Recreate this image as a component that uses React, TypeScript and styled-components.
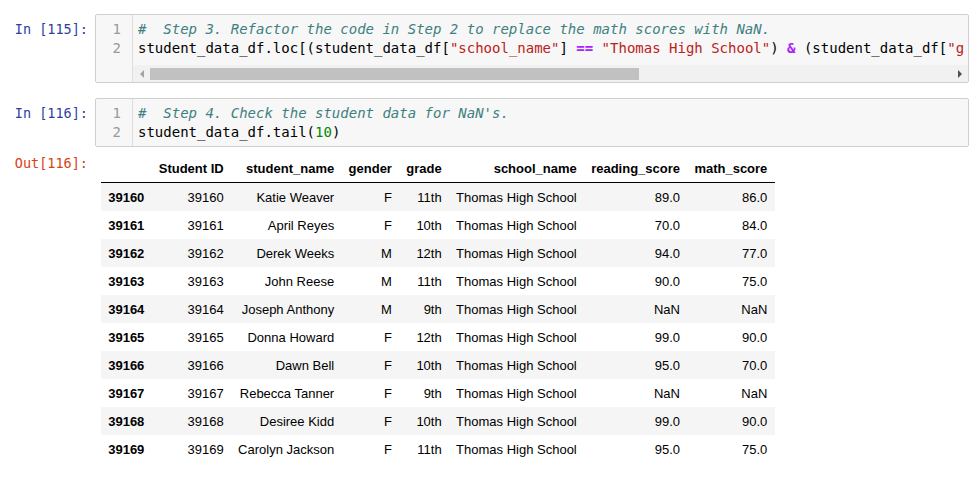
import * as React from 'react';
import styled, { createGlobalStyle } from 'styled-components';

const GlobalStyle = createGlobalStyle`
	html, body {
		margin: 0;
		padding: 0;
		background: #ffffff;
	}
`;

const Notebook = styled.div`
	padding: 14px 4px 0 0;
	display: flex;
	flex-direction: column;
`;

const Cell = styled.div<{ $gap?: number }>`
	display: flex;
	align-items: flex-start;
	margin-top: ${props => props.$gap || 0}px;
`;

const Prompt = styled.div<{ $out?: boolean }>`
	width: 95px;
	flex: none;
	box-sizing: border-box;
	padding: ${props => (props.$out ? '8px' : '6px')} 7px 0 0;
	text-align: right;
	font-family: 'DejaVu Sans Mono', monospace;
	font-size: 13.5px;
	line-height: ${props => (props.$out ? '17px' : '19px')};
	color: ${props => (props.$out ? '#D84315' : '#303F9F')};
	white-space: pre;
`;

const InputBox = styled.div`
	flex: 1;
	min-width: 0;
	display: flex;
	overflow: hidden;
	border: 1px solid #cfcfcf;
	border-radius: 2px;
	background: #f7f7f7;
`;

const Gutter = styled.div`
	width: 37px;
	flex: none;
	box-sizing: border-box;
	border-right: 1px solid #dddddd;
	padding: 5px 11px 0 0;
	text-align: right;
	font-family: 'DejaVu Sans Mono', monospace;
	font-size: 14px;
	line-height: 19px;
	color: #999999;
`;

const CodeColumn = styled.div`
	flex: 1;
	min-width: 0;
	display: flex;
	flex-direction: column;
`;

const CodeLines = styled.div<{ $bottom: number }>`
	padding: 5px 0 ${props => props.$bottom}px 5px;
	overflow: hidden;
	font-family: 'DejaVu Sans Mono', monospace;
	font-size: 14px;
	line-height: 19px;
	color: #000000;
	white-space: pre;
`;

const CodeLine = styled.div`
	height: 19px;
`;

const Comment = styled.span`
	color: #408080;
	font-style: italic;
`;

const Str = styled.span`
	color: #BA2121;
`;

const Op = styled.span`
	color: #AA22FF;
	font-weight: bold;
`;

const Num = styled.span`
	color: #008800;
`;

const Scrollbar = styled.div`
	height: 17px;
	display: flex;
	align-items: center;
	background: #f1f1f1;
`;

const ScrollButton = styled.div`
	width: 17px;
	height: 17px;
	flex: none;
	display: flex;
	align-items: center;
	justify-content: center;
`;

const Arrow = styled.div<{ $dir: 'left' | 'right' }>`
	width: 0;
	height: 0;
	border-top: 4px solid transparent;
	border-bottom: 4px solid transparent;
	${props => (props.$dir === 'left' ? 'border-right: 4px solid #a3a3a3;' : 'border-left: 4px solid #505050;')}
`;

const Track = styled.div`
	flex: 1;
	height: 12px;
`;

const Thumb = styled.div`
	height: 12px;
	background: #c1c1c1;
`;

const OutputArea = styled.div`
	flex: 1;
	padding: 7px 0 0 6px;
`;

const DataTable = styled.table`
	border-collapse: collapse;
	border-spacing: 0;
	font-family: 'Liberation Sans', Arial, sans-serif;
	font-size: 13px;
	color: #000000;

	th, td {
		padding: 6.5px 7.2px;
		text-align: right;
		vertical-align: middle;
		white-space: nowrap;
		line-height: normal;
	}

	th {
		font-weight: bold;
	}

	thead tr {
		border-bottom: 1px solid #000000;
	}

	tbody tr:nth-child(odd) {
		background: #f5f5f5;
	}
`;

const columns = ['Student ID', 'student_name', 'gender', 'grade', 'school_name', 'reading_score', 'math_score'];

const rows: [number, string, string, string, string, string][] = [
	[39160, 'Katie Weaver', 'F', '11th', '89.0', '86.0'],
	[39161, 'April Reyes', 'F', '10th', '70.0', '84.0'],
	[39162, 'Derek Weeks', 'M', '12th', '94.0', '77.0'],
	[39163, 'John Reese', 'M', '11th', '90.0', '75.0'],
	[39164, 'Joseph Anthony', 'M', '9th', 'NaN', 'NaN'],
	[39165, 'Donna Howard', 'F', '12th', '99.0', '90.0'],
	[39166, 'Dawn Bell', 'F', '10th', '95.0', '70.0'],
	[39167, 'Rebecca Tanner', 'F', '9th', 'NaN', 'NaN'],
	[39168, 'Desiree Kidd', 'F', '10th', '99.0', '90.0'],
	[39169, 'Carolyn Jackson', 'F', '11th', '95.0', '75.0']
];

export default function App() {
	return (
		<>
			<GlobalStyle />
			<Notebook>
				<Cell>
					<Prompt>In [115]:</Prompt>
					<InputBox>
						<Gutter>
							<div>1</div>
							<div>2</div>
						</Gutter>
						<CodeColumn>
							<CodeLines $bottom={7}>
								<CodeLine><Comment>#  Step 3. Refactor the code in Step 2 to replace the math scores with NaN.</Comment></CodeLine>
								<CodeLine>
									student_data_df.loc[(student_data_df[<Str>"school_name"</Str>] <Op>==</Op> <Str>"Thomas High School"</Str>) <Op>&amp;</Op> (student_data_df[<Str>"g</Str>
								</CodeLine>
							</CodeLines>
							<Scrollbar>
								<ScrollButton><Arrow $dir="left" /></ScrollButton>
								<Track>
									<Thumb style={{ width: '61%' }} />
								</Track>
								<ScrollButton><Arrow $dir="right" /></ScrollButton>
							</Scrollbar>
						</CodeColumn>
					</InputBox>
				</Cell>

				<Cell $gap={15}>
					<Prompt>In [116]:</Prompt>
					<InputBox>
						<Gutter>
							<div>1</div>
							<div>2</div>
						</Gutter>
						<CodeColumn>
							<CodeLines $bottom={4}>
								<CodeLine><Comment>#  Step 4. Check the student data for NaN's.</Comment></CodeLine>
								<CodeLine>student_data_df.tail(<Num>10</Num>)</CodeLine>
							</CodeLines>
						</CodeColumn>
					</InputBox>
				</Cell>

				<Cell>
					<Prompt $out>Out[116]:</Prompt>
					<OutputArea>
						<DataTable>
							<thead>
								<tr>
									<th></th>
									{columns.map(c => <th key={c}>{c}</th>)}
								</tr>
							</thead>
							<tbody>
								{rows.map(r => (
									<tr key={r[0]}>
										<th>{r[0]}</th>
										<td>{r[0]}</td>
										<td>{r[1]}</td>
										<td>{r[2]}</td>
										<td>{r[3]}</td>
										<td>Thomas High School</td>
										<td>{r[4]}</td>
										<td>{r[5]}</td>
									</tr>
								))}
							</tbody>
						</DataTable>
					</OutputArea>
				</Cell>
			</Notebook>
		</>
	);
}
